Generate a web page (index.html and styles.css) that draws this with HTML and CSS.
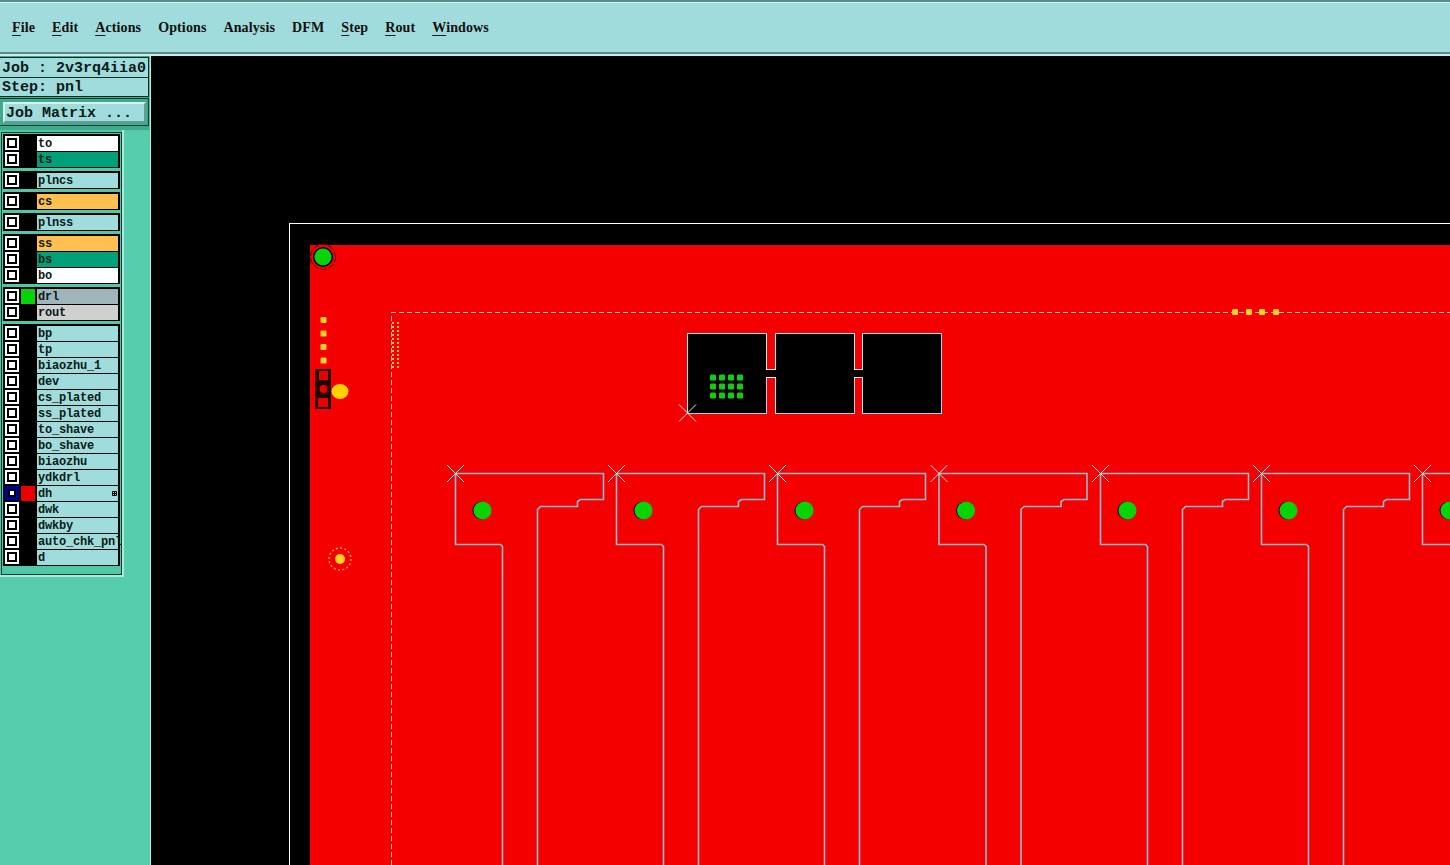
FILE: index.html
```html
<!DOCTYPE html>
<html lang="en">
<head>
<meta charset="utf-8">
<title>Genesis 2000</title>
<link rel="stylesheet" href="styles.css">
</head>
<body>
<header class="menubar">
  <span class="menu"><u>F</u>ile</span>
  <span class="menu"><u>E</u>dit</span>
  <span class="menu"><u>A</u>ctions</span>
  <span class="menu">Options</span>
  <span class="menu">Analysis</span>
  <span class="menu">DFM</span>
  <span class="menu"><u>S</u>tep</span>
  <span class="menu"><u>R</u>out</span>
  <span class="menu"><u>W</u>indows</span>
</header>
<main class="workspace">
  <aside class="sidebar">
    <section class="jobsection">
      <div class="jobfields">
        <div class="field">Job : 2v3rq4iia0</div>
        <div class="field">Step: pnl</div>
      </div>
      <div class="buttonframe"><div class="jobbutton">Job Matrix ...</div></div>
    </section>
    <section class="panel">
      <div class="panelinner">
        <div class="group">
          <div class="row"><i class="check"></i><i class="swatch"></i><span class="name c-white">to</span></div>
          <div class="row"><i class="check"></i><i class="swatch"></i><span class="name c-green">ts</span></div>
        </div>
        <div class="group">
          <div class="row"><i class="check"></i><i class="swatch"></i><span class="name">plncs</span></div>
        </div>
        <div class="group">
          <div class="row"><i class="check"></i><i class="swatch"></i><span class="name c-orange">cs</span></div>
        </div>
        <div class="group">
          <div class="row"><i class="check"></i><i class="swatch"></i><span class="name">plnss</span></div>
        </div>
        <div class="group">
          <div class="row"><i class="check"></i><i class="swatch"></i><span class="name c-orange">ss</span></div>
          <div class="row"><i class="check"></i><i class="swatch"></i><span class="name c-green">bs</span></div>
          <div class="row"><i class="check"></i><i class="swatch"></i><span class="name c-white">bo</span></div>
        </div>
        <div class="group">
          <div class="row"><i class="check"></i><i class="swatch s-green"></i><span class="name c-slate">drl</span></div>
          <div class="row"><i class="check"></i><i class="swatch"></i><span class="name c-grey">rout</span></div>
        </div>
        <div class="group">
          <div class="row"><i class="check"></i><i class="swatch"></i><span class="name">bp</span></div>
          <div class="row"><i class="check"></i><i class="swatch"></i><span class="name">tp</span></div>
          <div class="row"><i class="check"></i><i class="swatch"></i><span class="name">biaozhu_1</span></div>
          <div class="row"><i class="check"></i><i class="swatch"></i><span class="name">dev</span></div>
          <div class="row"><i class="check"></i><i class="swatch"></i><span class="name">cs_plated</span></div>
          <div class="row"><i class="check"></i><i class="swatch"></i><span class="name">ss_plated</span></div>
          <div class="row"><i class="check"></i><i class="swatch"></i><span class="name">to_shave</span></div>
          <div class="row"><i class="check"></i><i class="swatch"></i><span class="name">bo_shave</span></div>
          <div class="row"><i class="check"></i><i class="swatch"></i><span class="name">biaozhu</span></div>
          <div class="row"><i class="check"></i><i class="swatch"></i><span class="name">ydkdrl</span></div>
          <div class="row"><i class="check check-on"></i><i class="swatch s-red"></i><span class="name">dh<svg class="flag" viewBox="0 0 5 5" width="5" height="5"><path d="M.5.5h4v4h-4zM2.5.5v4M.5 2.5h4" fill="none" stroke="#000" stroke-width="1"/></svg></span></div>
          <div class="row"><i class="check"></i><i class="swatch"></i><span class="name">dwk</span></div>
          <div class="row"><i class="check"></i><i class="swatch"></i><span class="name">dwkby</span></div>
          <div class="row"><i class="check"></i><i class="swatch"></i><span class="name">auto_chk_pnl</span></div>
          <div class="row"><i class="check"></i><i class="swatch"></i><span class="name">d</span></div>
        </div>
      </div>
    </section>
  </aside>
  <svg class="canvas" viewBox="151 56 1299 809" width="1299" height="809" shape-rendering="crispEdges">
    <defs>
      <g id="cross" stroke="#d8e8ee" stroke-width="1" shape-rendering="auto">
        <path d="M-8.5 -8.5L8.5 8.5M-8.5 8.5L8.5 -8.5" fill="none"/>
      </g>
      <g id="finger">
        <path d="M0 0H148V26H125L122 28V33H85L82 36V400M0 0V71H45L47 73V400" fill="none" stroke="#90bccc" stroke-width="1.6" shape-rendering="auto"/>
        <use href="#cross"/>
        <circle cx="26" cy="37" r="9" fill="#000" shape-rendering="auto"/>
        <circle cx="27" cy="37" r="9" fill="#06d406" shape-rendering="auto"/>
      </g>
      <rect id="pad" x="-3" y="-3" width="6" height="6" rx="1.2" fill="#12cc12" shape-rendering="auto"/>
      <rect id="ypad" x="-3" y="-3" width="6" height="6" rx="1.2" fill="#ffd21e" shape-rendering="auto"/>
    </defs>
    <path d="M289.5 865V223.5H1450" fill="none" stroke="#fff"/>
    <rect x="310" y="245" width="1140" height="620" fill="#f50000"/>

    <!-- fiducial -->
    <g shape-rendering="auto">
      <circle cx="323" cy="257" r="13" fill="#f50000"/>
      <circle cx="323" cy="257" r="12.5" fill="none" stroke="#300" stroke-width="1" stroke-dasharray="6 2"/>
      <circle cx="323" cy="257" r="10" fill="#000"/>
      <circle cx="323" cy="257" r="8.5" fill="#06d406"/>
    </g>

    <!-- left column marks -->
    <use href="#ypad" x="323.5" y="320"/>
    <use href="#ypad" x="323.5" y="333.5"/>
    <use href="#ypad" x="323.5" y="347"/>
    <use href="#ypad" x="323.5" y="360.5"/>
    <rect x="315" y="369" width="16" height="40" fill="#200000"/>
    <rect x="319" y="371" width="9" height="9" fill="#e80000"/>
    <circle cx="323.5" cy="389" r="4" fill="#e80000" shape-rendering="auto"/>
    <rect x="318" y="398" width="10" height="9" fill="#e80000"/>
    <ellipse cx="340" cy="391.5" rx="8.5" ry="7.5" fill="#ffd200" shape-rendering="auto"/>

    <!-- lower target -->
    <g shape-rendering="auto">
      <circle cx="340" cy="559" r="5" fill="#ffd21e"/>
      <circle cx="340" cy="559" r="11" fill="none" stroke="#ffa51e" stroke-width="1.6" stroke-dasharray="2 2.3"/>
    </g>

    <!-- dashed profile -->
    <path d="M391.5 865V312.5H1450" fill="none" stroke="#e0c4c4" stroke-dasharray="5 3"/>
    <path d="M393 322V370M398 322V370" fill="none" stroke="#ffd21e" stroke-width="2" stroke-dasharray="2 2"/>
    <use href="#ypad" x="1235" y="312"/>
    <use href="#ypad" x="1249" y="312"/>
    <use href="#ypad" x="1262" y="312"/>
    <use href="#ypad" x="1276" y="312"/>

    <!-- coupon -->
    <path d="M687.5 333.5H766.5V369.5H775.5V333.5H854.5V369.5H862.5V333.5H941.5V413.5H862.5V377.5H854.5V413.5H775.5V377.5H766.5V413.5H687.5Z" fill="#000" stroke="#dcecf0"/>
    <path d="M687.5 413.5H766.5V377.5M775.5 413.5H854.5V377.5M862.5 413.5H941.5V333.5" fill="none" stroke="#9cd8e4"/>
    <use href="#pad" x="713" y="377.5"/><use href="#pad" x="722" y="377.5"/><use href="#pad" x="731" y="377.5"/><use href="#pad" x="740" y="377.5"/>
    <use href="#pad" x="713" y="386.5"/><use href="#pad" x="722" y="386.5"/><use href="#pad" x="731" y="386.5"/><use href="#pad" x="740" y="386.5"/>
    <use href="#pad" x="713" y="395.5"/><use href="#pad" x="722" y="395.5"/><use href="#pad" x="731" y="395.5"/><use href="#pad" x="740" y="395.5"/>
    <use href="#cross" x="687.5" y="413"/>

    <!-- fingers -->
    <use href="#finger" x="455.5" y="473.5"/>
    <use href="#finger" x="616.5" y="473.5"/>
    <use href="#finger" x="777.5" y="473.5"/>
    <use href="#finger" x="939" y="473.5"/>
    <use href="#finger" x="1100.5" y="473.5"/>
    <use href="#finger" x="1261.5" y="473.5"/>
    <use href="#finger" x="1422.5" y="473.5"/>
  </svg>
</main>
</body>
</html>
```

FILE: styles.css
```css
* { box-sizing: border-box; }

html, body {
  margin: 0;
  height: 865px;
  overflow: hidden;
  background: #000;
}

body {
  display: flex;
  flex-direction: column;
}

.menubar {
  flex: none;
  height: 56px;
  display: flex;
  align-items: center;
  gap: 17px;
  padding: 2px 0 2px 12px;
  background: #a0dcdc;
  border-top: 2px solid #5b8c8c;
  border-bottom: 2px solid #c8ecec;
  box-shadow: inset 0 1px 0 #d4f2f2, inset 0 -2px 0 #5b8c8c;
  font: bold 14px/16px "Liberation Serif", serif;
  letter-spacing: 0.12px;
  color: #101010;
}

.menu u {
  text-underline-offset: 3px;
  text-decoration-thickness: 1px;
}

.workspace {
  flex: 1;
  display: flex;
  min-height: 0;
}

.sidebar {
  flex: none;
  width: 151px;
  background: #55cdac;
  border-right: 1px solid #b8ece0;
}

.jobsection {
  height: 74px;
  padding-top: 1px;
  background: #3fa98a;
  border-right: 1px solid #5fb8a0;
}

.jobfields {
  width: 149px;
  border: 1px solid #0b2a22;
  border-left: 0;
}

.field {
  height: 19px;
  padding: 2px 0 0 2px;
  background: #a0dcdc;
  font: bold 15px/17px "Liberation Mono", monospace;
  color: #0a1a16;
  white-space: pre;
}

.field + .field {
  border-top: 1px solid #0b2a22;
  padding-top: 1px;
}

.buttonframe {
  width: 149px;
  height: 28px;
  margin-top: 1px;
  padding: 3px 2px 0 3px;
  border: 1px solid #123a30;
  border-left: 0;
}

.jobbutton {
  height: 21px;
  padding: 2px 0 0 1px;
  background: #a0dcdc;
  border: 2px solid;
  border-color: #d2f4f0 #5f9c9a #5f9c9a #d2f4f0;
  font: bold 15px/15px "Liberation Mono", monospace;
  color: #0a1a16;
  white-space: pre;
}

.panel {
  width: 124px;
  padding-top: 2px;
  background: #50c8a8;
  border-right: 2px solid #aeeadc;
  border-bottom: 2px solid #aeeadc;
}

.panelinner {
  display: flex;
  flex-direction: column;
  gap: 3px;
  padding: 1px 0 8px 1px;
  margin-left: 1px;
  border: 1px solid #123a30;
}

.group {
  display: flex;
  flex-direction: column;
  gap: 2px;
  width: 117px;
  padding: 2px;
  background: #000;
}

.row {
  display: grid;
  grid-template-columns: 14px 14px 81px;
  gap: 2px;
  height: 14px;
}

.check {
  display: block;
  width: 14px;
  height: 14px;
  background: #fff;
  padding: 2px;
}

.check::after {
  content: "";
  display: block;
  box-sizing: border-box;
  width: 10px;
  height: 10px;
  background: #fff;
  border: 2px solid #000;
}

.check-on {
  background: #0000a0;
  padding: 3px;
}

.check-on::after {
  width: 8px;
  height: 8px;
  border-width: 2px;
  border-color: #000;
}

.swatch {
  display: block;
}

.s-green { background: #06d406; }
.s-red { background: #ee0000; }

.name {
  position: relative;
  padding: 1px 0 0 1px;
  background: #a0dcdc;
  font: bold 12px/14px "Liberation Mono", monospace;
  letter-spacing: -0.2px;
  color: #0a1a16;
  white-space: nowrap;
}

.c-white { background: #fff; }
.c-green { background: #00a078; }
.c-orange { background: #ffc050; }
.c-slate { background: #a0b4bc; }
.c-grey { background: #d0d0d0; }

.flag {
  position: absolute;
  right: 1px;
  top: 5px;
}

.canvas {
  display: block;
  flex: none;
}
```
